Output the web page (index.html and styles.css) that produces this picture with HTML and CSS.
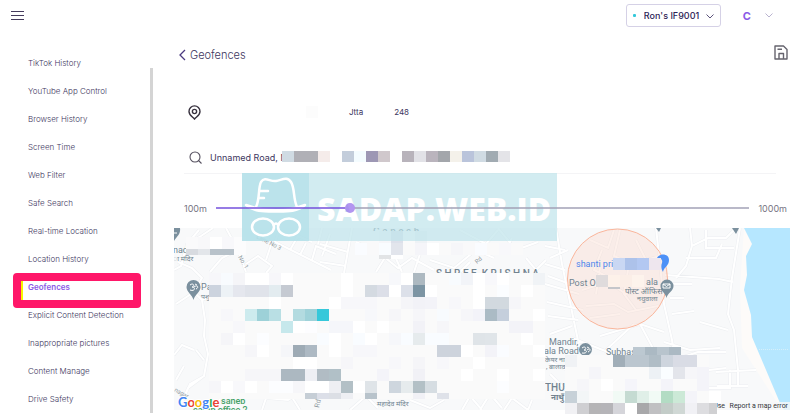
FILE: index.html
```html
<!DOCTYPE html>
<html lang="en">
<head>
<meta charset="utf-8">
<title>Geofences</title>
<link rel="stylesheet" href="styles.css">
</head>
<body>
<header class="topbar">
  <button class="icon-button" type="button" aria-label="Menu">
    <svg width="13" height="10" viewBox="0 0 13 10" stroke="#453b5c" stroke-width="1.200"><path d="M0 .5h13M0 4.500h13M0 8.500h13"/></svg>
  </button>
  <div class="account">
    <div class="device">
      <span class="device-dot"></span>
      <select class="device-select" aria-label="Device"><option>Ron's IF9001</option></select>
      <svg class="device-chevron" width="8" height="5" viewBox="0 0 8 5" fill="none" stroke="#5b527a"><path d="M.5 .5 4 4 7.500 .5"/></svg>
    </div>
    <button class="user" type="button">C
      <svg width="8" height="5" viewBox="0 0 8 5" fill="none" stroke="#b9b3cf"><path d="M.5 .5 4 4 7.500 .5"/></svg>
    </button>
  </div>
</header>
<div class="layout">
  <aside class="sidebar">
    <nav class="menu">
      <a href="#">TikTok History</a>
      <a href="#">YouTube App Control</a>
      <a href="#">Browser History</a>
      <a href="#">Screen Time</a>
      <a href="#">Web Filter</a>
      <a href="#">Safe Search</a>
      <a href="#">Real-time Location</a>
      <a href="#">Location History</a>
      <a href="#" class="active">Geofences</a>
      <a href="#">Explicit Content Detection</a>
      <a href="#">Inappropriate pictures</a>
      <a href="#">Content Manage</a>
      <a href="#">Drive Safety</a>
    </nav>
    <div class="scrollbar"></div>
  </aside>
  <main class="content">
    <div class="title-row">
      <a class="back" href="#">
        <svg width="7" height="12" viewBox="0 0 7 12" fill="none" stroke="#4b3a80" stroke-width="1.300"><path d="M6 1 1 6l5 5"/></svg>
        Geofences
      </a>
      <button class="icon-button save" type="button" aria-label="Save">
        <svg width="14" height="15" viewBox="0 0 14 15" fill="none" stroke="#66646e" stroke-width="1.400" stroke-linejoin="round"><path d="M1 1h8.500L13 4.500V14H1zM5 14V8.500h4.500V14M3.500 4.300h4.500"/></svg>
      </button>
    </div>
    <div class="place-row">
      <svg width="13" height="15" viewBox="0 0 13 15" fill="none" stroke="#38323f" stroke-width="1.400"><path d="M6.500 14C5 12 1 10.500 1 6.400a5.500 5.500 0 0 1 11 0C12 10.500 8 12 6.500 14z"/><circle cx="6.500" cy="6.500" r="2.100"/></svg>
      <span class="blank-tile"></span>
      <span>Jtta</span>
      <span>248</span>
    </div>
    <div class="search-row">
      <svg width="13" height="13" viewBox="0 0 13 13" fill="none" stroke="#55505f" stroke-width="1.100"><circle cx="6" cy="6" r="5"/><path d="m9.500 9.500 3 3"/></svg>
      <input class="search" type="text" aria-label="Address" value="Unnamed Road, M">
      <svg class="address-tiles" id="address-tiles" width="228" height="11" viewBox="0 0 228 11" shape-rendering="crispEdges"></svg>
    </div>
    <div class="radius-row">
      <label for="radius">100m</label>
      <input class="radius" id="radius" type="range" min="100" max="1000" value="322">
      <span>1000m</span>
    </div>
    <svg class="map" viewBox="174 228 616 186" preserveAspectRatio="xMinYMin slice">
      <defs>
        <clipPath id="map-area"><rect x="174" y="228" width="616" height="182"/></clipPath>
        <path id="roads" d="M199 230l-12 14-6 22-7 4M187 244l14-8 12-8M178 262l14 6 10 10-8 14-18 12M194 292l8 8 3 20-1 16 4 18-4 22-14 8-8 18M202 300l10-4M196 350l8 10M174 355l8-10 12 5M184 366l-8 14M204 376l-16 12-6 14M226 228l12 22 8 22M238 250l-16 8-12 14M280 228l-5 14 56 28M290 250l8-14 14 6M300 255l6-12M258 232l14 10-6 18M246 264l12-8 14 10-6 7M312 260l4-14 20 8M322 228l-4 16M352 228l-8 45M320 244l28 8M330 234l-8 22M320 262l26 4M356 242l22 10 20 16 14-10 22 12M376 272l10-16M402 272l-8-18M420 254l-6 18M430 260l24 8 22-18 18 8M460 230l26 14 12-14M498 228l18 22 22-8M526 258l10 12 10-10M470 262l-10 10M512 238l-8 16M556 228l6 36 18 86M545 246l20 4M545 264l20 6M545 284l34 10M547 302l36 8M548 316l30 4M550 334l22-8M550 258l18-8M548 276l22 8M590 240l18 8 6-18M602 250l-8 20 12 6M582 290l26-8 18 12 22-4M586 306l28-2 14 8 30-6M590 318l30-4M600 268l-4 26M620 230l-6 26 18 8M636 240l10 20 14-4M628 270l-4 24 12 16M656 228l4 36 4 40 8 36 5 35M690 228l2 18 16-8h18l10-10M692 246l-6 20-10 12M706 230v18h28M686 258h30l6-14M740 228l-8 50-4 36 6 16 4 40v16M665 275l54 4 14 3M670 284h22M670 298h14M672 314l22-3M700 322l28 8M664 342l26 8 30-2M674 360l24-8h28M676 374l50-6M716 372l40-2M717 386h31M690 388h40v-18M600 336l40-12 24 8M606 350l28-26M640 324l16 30M572 338l36 14M545 360l22 10M550 374l18 18M216 410l4-12 10 4M262 410l4-12 22 2 10-6M300 410l-10-16M350 410l16-14 12 12M410 400l20 8 14-8M462 410l8-14 12 14M480 410l10-16 12 14M504 410l8-12 16 12M532 400l-4 10"/>
      </defs>
      <g clip-path="url(#map-area)">
        <rect x="174" y="228" width="616" height="182" fill="#f8f9fa"/>
        <path d="M744 228l-4 60 2 60 40 62h8V228z" fill="#fdfbf9"/>
        <use href="#roads" class="road-edge"/>
        <use href="#roads" class="road"/>
        <path d="M744 228l8 16-6 12 1 19-3 15 7 25 1 22 28 66 4 7h6V228z" fill="#b6e7ff"/>
        <path d="M759 349.500h30" stroke="#d5effa" stroke-dasharray="1 1"/>
        <circle cx="617.500" cy="279" r="50" fill="#fbd9cd" fill-opacity=".4" stroke="#fab69c"/>
        <g class="pin">
          <path d="M174 228h6c1 6-3 8-6 13z"/>
          <path d="M193.500 300c-1-5-7-8-7-13a7 7 0 0 1 14 0c0 5-6 8-7 13z"/>
          <path d="M666.500 298c-1-5-6-7-6-12a6.500 6.500 0 0 1 13 0c0 5-6 7-7 12z"/>
          <circle cx="585.500" cy="349.500" r="6.500"/>
          <path d="M656 228h5l-2 4zM732 228h7l-3 6z"/>
        </g>
        <g fill="none" stroke="#fff" stroke-width="1"><path d="M190 285c4-3 5 2 2 2 4 0 3 5-2 3m4-3c4-3 5 1 2 2m-1-5 2 1M582 348c4-3 5 2 2 2 4 0 3 4-2 3m5-3c4-3 4 1 1 2m-1-5 2 1M174 233h3"/><path d="M663 284h7v4h-7zm0 0 3.500 2.500 3.500-2.500"/></g>
        <path d="M657 258c2-5 12-5 12 2 0 6-5 7-6 12-2-3-2-7-1-9 1-4-2-5-5-5z" fill="#4d91f7"/>
        <g class="poi">
          <text x="173" y="253" font-size="9">nad</text>
          <text x="173" y="261" font-size="7">ा मंदिर</text>
          <text x="201" y="290" font-size="9">Pa</text>
          <text x="201" y="299" font-size="7">पशु</text>
          <text x="549" y="345" font-size="9">Mandir,</text>
          <text x="544" y="354" font-size="9">ala Road</text>
          <text x="545" y="362" font-size="7">केयर नाग</text>
          <text x="546" y="369" font-size="7">, बालाव</text>
          <text x="606" y="355" font-size="9">Subhas</text>
          <text x="569" y="286" font-size="9">Post O</text>
          <text x="646" y="285" font-size="9">ala</text>
          <text x="625" y="294" font-size="8">पोस्ट ऑफिस</text>
          <text x="637" y="301" font-size="7">नथुवाला</text>
          <text x="377" y="406" font-size="7">महादेव मंदिर</text>
        </g>
        <text x="576" y="267" class="blue-label">shanti pri</text>
        <g class="area">
          <text x="436" y="277">S H R E E&#160; K R I S H N A</text>
          <text x="373" y="235">G a n e s h</text>
          <text x="545" y="391">THU</text>
          <text x="551" y="400" font-size="8" font-weight="700">नाथुँ</text>
        </g>
        <g class="street">
          <text transform="translate(256 238) rotate(27)">Lane No 3</text>
          <text transform="translate(238 257) rotate(60)">No. 1</text>
          <text transform="translate(174 391) rotate(30)">nagar</text>
          <text transform="translate(477 264) rotate(-40)">Rd</text>
          <text transform="translate(319 408) rotate(-78)" font-size="7">Rd</text>
        </g>
        <g class="green-label"><text x="221" y="404">saheb</text><text x="193" y="413">camp office 2</text></g>
        <text class="logo" x="178" y="407"><tspan fill="#4285f4">G</tspan><tspan fill="#ea4335">o</tspan><tspan fill="#fbbc05">o</tspan><tspan fill="#4285f4">g</tspan><tspan fill="#34a853">l</tspan><tspan fill="#ea4335">e</tspan></text>
        <rect x="710" y="402" width="80" height="8" fill="#f6f8f9" opacity=".8"/>
        <g class="credits" text-anchor="end"><text x="725" y="408">Use</text><text x="788" y="408">Report a map error</text></g>
      </g>
      <g id="map-tiles" shape-rendering="crispEdges"></g>
    </svg>
    <div class="watermark">
      <svg width="67" height="68" viewBox="0 0 67 68" fill="none" stroke="#fff" stroke-width="2.500" stroke-linecap="round" stroke-linejoin="round"><path d="M4 32c20 7 40 7 59 0-8 7-18 6.500-29 6.500S12 39 4 32zM14 34c4-8 2-19 5-25 4-6 9 0 15-1s11-5 15 1c4 6 2 17 6 25M19 18h7M17 25h5"/><ellipse cx="21" cy="54" rx="11" ry="8.500"/><ellipse cx="47" cy="54" rx="11" ry="8.500"/><path d="M32 52c1-2 3-2 4 0"/></svg>
      <span>SADAP.WEB.ID</span>
    </div>
  </main>
</div>
<script src="script.js"></script>
</body>
</html>
```
FILE: styles.css
```css
* { box-sizing: border-box; }
body {
  margin: 0;
  background: #fff;
  color: #3d3660;
  font-family: Inter, "Liberation Sans", sans-serif;
  font-size: 8px;
  overflow: hidden;
}
button, input, select {
  font: inherit;
  color: inherit;
  background: none;
  border: 0;
  padding: 0;
  margin: 0;
}
a { color: inherit; text-decoration: none; }
svg { display: block; flex: none; }

.topbar {
  display: flex;
  align-items: center;
  justify-content: space-between;
  height: 31px;
  padding: 0 27px 0 11px;
}
.icon-button { display: flex; }
.account { display: flex; align-items: center; gap: 22px; }
.device {
  display: flex;
  align-items: center;
  position: relative;
  height: 23px;
  padding: 0 6px;
  border: 1px solid #d5d1e6;
  border-radius: 3px;
}
.device-dot { width: 3px; height: 3px; border-radius: 1px; background: #34c8da; }
.device-select {
  appearance: none;
  width: 78px;
  height: 21px;
  padding-left: 8px;
  color: #2d2356;
  font-size: 9px;
  font-weight: 500;
}
.device-chevron { pointer-events: none; margin: 2px 0 0 -8px; }
.user {
  display: flex;
  align-items: center;
  gap: 14px;
  color: #8a5ae6;
  font-size: 11px;
  font-weight: 700;
}

.layout { display: flex; align-items: stretch; }
.sidebar { display: flex; flex: none; width: 153px; font-weight: 300; }
.menu { flex: 1; padding-top: 18px; }
.menu a {
  display: flex;
  align-items: center;
  position: relative;
  height: 28px;
  padding-left: 28px;
}
.menu .active { color: #8a5ae6; font-weight: 600; }
.menu .active::before {
  content: "";
  position: absolute;
  inset: 8px auto 1px 21px;
  width: 2px;
  background: #f8f500;
}
.menu .active::after {
  content: "";
  position: absolute;
  inset: 0 9px -7px 13px;
  border: 8px solid #ff1769;
  border-radius: 4px;
  z-index: 1;
}
.scrollbar { width: 3px; margin: 37px 0 1px; background: #d4d4d4; }

.content {
  flex: 1;
  min-width: 0;
  position: relative;
  padding: 0 10px 0 21px;
}
.title-row {
  display: flex;
  align-items: center;
  justify-content: space-between;
  height: 48px;
  padding: 0 2px 0 5px;
}
.back { display: flex; align-items: center; gap: 4px; font-size: 11px; font-weight: 300; }
.save { align-self: flex-start; padding-top: 14px; }
.place-row {
  display: flex;
  align-items: center;
  height: 66px;
  padding-left: 14px;
  gap: 31px;
}
.blank-tile { width: 12px; height: 12px; margin-left: 74px; background: #fcfcfc; }
.search-row {
  display: flex;
  align-items: center;
  position: relative;
  height: 29px;
  margin-left: 10px;
  margin-right: 14px;
  padding: 0 0 4px 5px;
  gap: 8px;
  border-bottom: 1px solid #f4f4f6;
}
.search { flex: 1; font-size: 9px; }
.address-tiles { position: absolute; left: 98px; top: 6px; }
.radius-row {
  display: flex;
  align-items: center;
  height: 54px;
  padding: 14px 3px 0 10px;
  gap: 9px;
  color: #777583;
  font-size: 9px;
}
.radius {
  appearance: none;
  flex: 1;
  min-width: 0;
  height: 10px;
  position: relative;
  z-index: 1;
  opacity: .75;
  background: linear-gradient(90deg, #7450dc 25%, #a2a1b6 25%) center / 100% 2px no-repeat;
}
.radius::-webkit-slider-thumb {
  appearance: none;
  width: 10px;
  height: 10px;
  border-radius: 50%;
  background: #9a74ec;
}
.map { width: 100%; height: 186px; }
.watermark {
  display: flex;
  align-items: center;
  gap: 8px;
  position: absolute;
  left: 89px;
  top: 142px;
  width: 315px;
  height: 68px;
  background: rgba(191, 228, 235, .7);
  color: #fff;
  font: 800 32px/68px "Open Sans", sans-serif;
}
.watermark svg { background: rgba(172, 222, 232, .6); }
.watermark span { padding-top: 3px; }

.road, .road-edge { fill: none; stroke: #fff; stroke-width: 2px; }
.road-edge { stroke: #eceef1; stroke-width: 3px; }
.map text { font-family: Roboto, "Noto Sans", sans-serif; }
.poi { fill: #6f838f; }
.pin { fill: #7b909e; }
.blue-label { fill: #4d86ec; font-size: 9px; }
.area { fill: #72838f; font-size: 10px; font-weight: 500; }
.street { fill: #909aa1; font-size: 6px; }
.green-label { fill: #46a169; font-size: 9px; font-weight: 500; }
.map .logo {
  font-family: Lato, sans-serif;
  font-size: 13px;
  font-weight: 700;
  stroke: #fff;
  stroke-width: 2px;
  paint-order: stroke;
}
.credits { fill: #33363b; font-size: 7px; }
```
FILE: script.js
```js
const SVG_NS = "http://www.w3.org/2000/svg";

function tile(parent, x, y, w, h, fill) {
  const r = document.createElementNS(SVG_NS, "rect");
  Object.entries({ x, y, width: w, height: h, fill }).forEach(([k, v]) => r.setAttribute(k, v));
  parent.appendChild(r);
}

// Each row is "column:colour" pairs on a grid of 12px columns.
function tileRow(parent, x0, y, h, row) {
  row.split(" ").forEach((pair) => {
    const [col, colour] = pair.split(":");
    tile(parent, x0 + col * 12, y, 12, h, "#" + colour);
  });
}

tileRow(document.getElementById("address-tiles"), 0, 0, 11,
  "0:d0dbe3 1:b0b0b6 2:b0b0b6 3:f5ecea 5:c3cddb 6:f4fcff 7:9d97b4 8:d0c8cc 10:b8b3bb 11:e2e2e7 12:bab4bd 13:a3a6ab 14:f4f1ea 15:bac4db 16:d0dbe3 17:a1abb2 18:e4e4e8");

const map = document.getElementById("map-tiles");

tile(map, 209, 273, 336, 126, "#fafafa");
[
  "0:f7f7fa 1:f8fbfe 2:f5f5f8 3:fff 4:fff 5:f7f7fa 6:fff 11:fff 15:f7f8fb 16:fff 17:adb9c1 20:f8fbfe 21:f2f4f8 22:fff 23:f8f8fb 24:fff 27:f0f3f6",
  "0:ccd3de 1:edf2f6 2:e5e7ee 3:e0e3ea 4:e0e3ea 5:e3ecf0 6:c5cad2 11:fff 13:d4dae1 14:dcdfe8 15:fff 16:dce0e9 17:7d95a4 18:fff 22:fff 24:fbfdff 26:fff",
  "5:fff 10:fff 11:f7f7fa 12:f7f7fa 13:f7f7fa 16:f5f5f8 17:f2f2f7 18:f3f3f8 20:f7f7fa 22:fff 23:d2d9df 24:d2d9df 25:f6f6f9",
  "1:f7f7fa 3:cdebee 4:9dd1d8 5:b9dfe4 7:b3dbe0 8:9fd2d9 9:36c8da 13:f7f8fb 15:f6f6f9 17:f6f6f9 19:f8fbfe 21:f6f6f9 22:f3f3f9 23:abbbc5 24:c5cfdc 27:fff",
  "2:f7f7fa 6:c6e8ec 7:fff 8:fdfdff 10:f5f6fa 11:f5f6fa 12:fff 14:fff 17:f2f2f7 19:f6f6f9 25:f3f3f8 26:f3f3f8",
  "1:f5f5f8 2:fff 4:fcfdff 9:f9fcff 10:fff 12:f9fcff 13:fff 15:f6f7fa 16:f9fcff 17:e6ebed 18:f9fcff 19:f9fcff 22:dfe4e8 23:e0e5e9 26:fff",
  "3:f6f6f9 4:fff 6:f5f6f9 7:9eabb5 8:adb9c3 10:fff 12:f7f7fa 13:f7f7fa 19:cdd3dc 20:cdd3dc 21:fff 23:f3f3f8 24:fafcff 27:fff",
  "7:fff 8:fff 11:f6f6f9 15:f7f7fa 17:f5f5f8 19:f7f7fa 22:fff",
  "3:f6f6f9 4:f6f6f9 5:f6f6f9 6:acb8c1 7:acb8c1 8:eeeff4 9:b1bcc4 10:b1c0c7 14:f4f4f9 17:f1f1f6 21:fff 24:fff 27:fff",
  "0:f6f6f9 1:fff 2:f8f8fb 3:fff 5:fcfdff 6:fcfdff 7:f6f6f9 8:fff 9:fff 10:eeeff3 11:b3c0c6 12:fff 13:dfe4e8 15:ced6de 16:e6ebed 17:b3c0c6 18:d6dde2 24:fcfdff",
].forEach((row, i) => tileRow(map, 209, 273 + i * 12, 12, row));
tileRow(map, 209, 393, 6, "8:c6ced6 9:dcdfe8 10:dcdfe5 11:eeeff3 13:b8c3cb 17:f1f1f6 19:dfe2e9");

tileRow(map, 186, 237, 12, "0:fafafb 1:f8f8fa 2:fff 3:f8f8fb 4:fcfcfd");
tileRow(map, 186, 249, 6, "0:d8dbe0 1:e3e6ea 2:b8c2ca 3:b8c2ca 4:fcfcfd");
tileRow(map, 355, 243, 12, "0:fafcff 1:f9f9fa 2:f9fcff 3:e2e5ec 4:fafafa 5:f5f5f9 6:fff 7:fafafa 8:f6f6f9 9:f9f9fa 10:fafcff 11:fafafa 12:f8f8fb 13:fafafa");
tileRow(map, 355, 255, 4, "2:e2e4e6 3:fff");
tileRow(map, 367, 231, 12, "0:f9f9fa 1:f6f6f9 2:dce0ea 3:fafafa 4:eef2f5");

tile(map, 565, 355, 144, 59, "#fafafa");
tileRow(map, 633, 347, 8, "0:bcc8d1 1:abb9c3 2:b8c4cd 3:abb9c3");
tileRow(map, 565, 355, 12, "0:f0f2f5 4:a1aeb8 5:bbc6cf 6:bbc6cf 7:b0bdc6 8:ced5de 9:d9dce5 10:d9dce5");
tileRow(map, 565, 367, 12, "2:f5f5f9 7:edf1f5 8:fafdff 9:e3e5eb 10:f6f6f9 11:f4f4f9");
tileRow(map, 565, 379, 12, "1:f6f6f9 3:fff 5:f5f5fa 8:f4f4f9 11:f4f4f9");
tileRow(map, 565, 391, 12, "0:c7d1d8 1:f3f6f7 4:f1faf5 5:c5dbd2 6:e0efe8 7:f1faf5 8:b3dcc4 9:cce9d7 10:f4f4f9 12:fff");
tileRow(map, 565, 403, 11, "0:f1f1f4 1:cfcfd2 2:b5b4b6 3:b5b4b8 4:d5d5da 5:fff 6:a8a8aa 7:c0c0c2 8:c3ccc8 9:d0d8d5 10:f1f1f5 11:dddde0");
tile(map, 709, 403, 8, 11, "#d0d0d2");

tileRow(map, 613, 258, 12, "0:c9d7f3 1:adc2ea 2:b3c8f2 3:eee6ee");
tileRow(map, 596, 275, 12, "0:dfdbdc 1:fdf1e9 2:fbeee7 3:fdf3ec");
tile(map, 608, 287, 12, 2, "#c5c6ca");
```
